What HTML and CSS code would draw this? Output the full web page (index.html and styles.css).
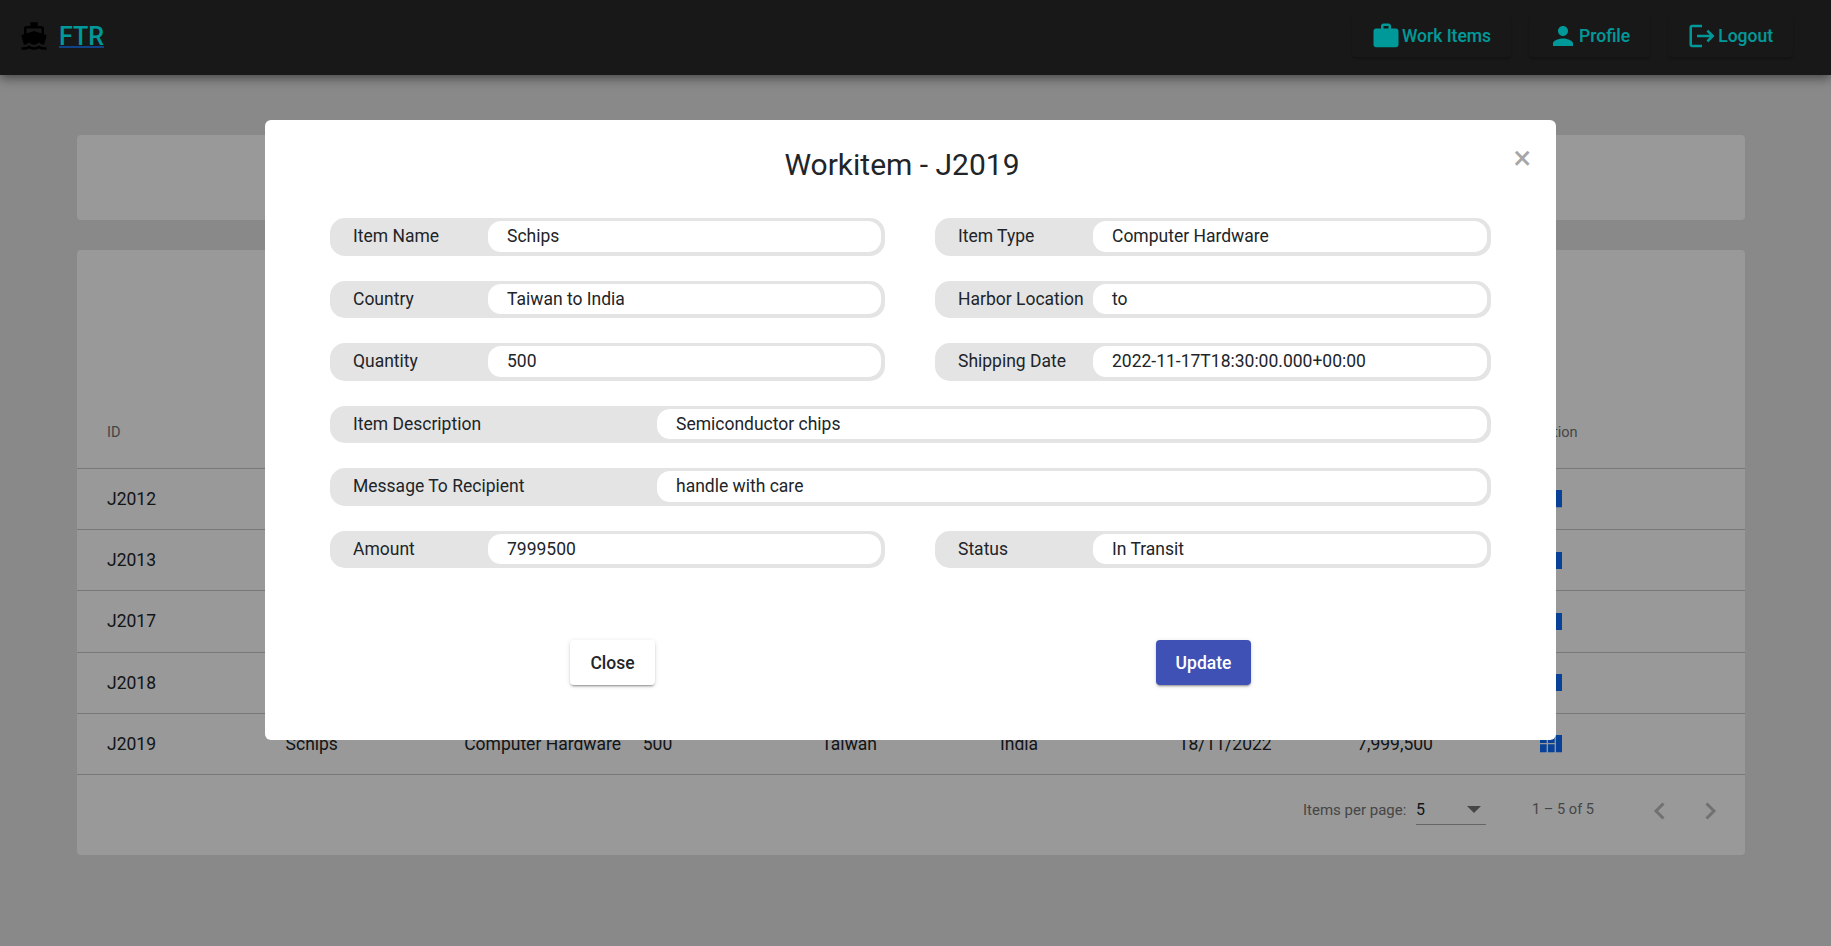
FILE: index.html
```html
<!DOCTYPE html>
<html lang="en">
    <head>
        <meta charset="UTF-8" />
        <meta name="viewport" content="width=device-width, initial-scale=1.0" />
        <title>FTR - Work Items</title>
        <link rel="stylesheet" href="styles.css">
    </head>
    <body>
        <header class="topbar">
            <svg class="boat" viewBox="0 0 24 24"><path d="M20 21c-1.39 0-2.78-.47-4-1.32-2.44 1.71-5.56 1.71-8 0C6.78 20.53 5.39 21 4 21H2v2h2c1.38 0 2.74-.35 4-.99 2.52 1.29 5.48 1.29 8 0 1.26.65 2.62.99 4 .99h2v-2h-2zM3.95 19H4c1.6 0 3.02-.88 4-2 .98 1.12 2.4 2 4 2s3.02-.88 4-2c.98 1.12 2.4 2 4 2h.05l1.89-6.68c.08-.26.06-.54-.06-.78s-.34-.42-.6-.5L20 10.62V6c0-1.1-.9-2-2-2h-3V1H9v3H6c-1.1 0-2 .9-2 2v4.62l-1.29.42c-.26.08-.48.26-.6.5s-.15.52-.06.78L3.95 19zM6 6h12v3.97L12 8 6 9.97V6z"/></svg>
            <a class="brand" href="#">FTR</a>
            <nav class="nav">
                <a class="nav-btn" href="#">
                    <svg viewBox="0 0 24 24"><path d="M20 6h-4V4c0-1.11-.89-2-2-2h-4c-1.11 0-2 .89-2 2v2H4c-1.11 0-1.99.89-1.99 2L2 19c0 1.11.89 2 2 2h16c1.11 0 2-.89 2-2V8c0-1.11-.89-2-2-2zm-6 0h-4V4h4v2z"/></svg>
                    <span>Work Items</span>
                </a>
                <a class="nav-btn" href="#">
                    <svg viewBox="0 0 24 24"><path d="M12 12c2.21 0 4-1.79 4-4s-1.79-4-4-4-4 1.79-4 4 1.79 4 4 4zm0 2c-2.67 0-8 1.34-8 4v2h16v-2c0-2.66-5.33-4-8-4z"/></svg>
                    <span>Profile</span>
                </a>
                <a class="nav-btn" href="#">
                    <svg viewBox="0 0 24 24"><path d="M17 7l-1.41 1.41L18.17 11H8v2h10.17l-2.58 2.58L17 17l5-5zM4 5h8V3H4c-1.1 0-2 .9-2 2v14c0 1.1.9 2 2 2h8v-2H4V5z"/></svg>
                    <span>Logout</span>
                </a>
            </nav>
        </header>

        <main class="page">
            <section class="card card-top"></section>
            <section class="card card-table">
                <div class="row row-head">
                    <span>ID</span>
                    <span></span><span></span><span></span><span></span><span></span><span></span><span></span>
                    <span>Action</span>
                </div>
                <div class="row">
                    <span>J2012</span>
                    <span></span><span></span><span></span><span></span><span></span><span></span><span></span>
                    <svg class="view-icon" viewBox="4 5 17 13"><path d="M4 11h5V5H4v6zm0 7h5v-6H4v6zm6 0h5v-6h-5v6zm6 0h5v-6h-5v6zm-6-7h5V5h-5v6zm6-5v6h5V5h-5z"/></svg>
                </div>
                <div class="row">
                    <span>J2013</span>
                    <span></span><span></span><span></span><span></span><span></span><span></span><span></span>
                    <svg class="view-icon" viewBox="4 5 17 13"><path d="M4 11h5V5H4v6zm0 7h5v-6H4v6zm6 0h5v-6h-5v6zm6 0h5v-6h-5v6zm-6-7h5V5h-5v6zm6-5v6h5V5h-5z"/></svg>
                </div>
                <div class="row">
                    <span>J2017</span>
                    <span></span><span></span><span></span><span></span><span></span><span></span><span></span>
                    <svg class="view-icon" viewBox="4 5 17 13"><path d="M4 11h5V5H4v6zm0 7h5v-6H4v6zm6 0h5v-6h-5v6zm6 0h5v-6h-5v6zm-6-7h5V5h-5v6zm6-5v6h5V5h-5z"/></svg>
                </div>
                <div class="row">
                    <span>J2018</span>
                    <span></span><span></span><span></span><span></span><span></span><span></span><span></span>
                    <svg class="view-icon" viewBox="4 5 17 13"><path d="M4 11h5V5H4v6zm0 7h5v-6H4v6zm6 0h5v-6h-5v6zm6 0h5v-6h-5v6zm-6-7h5V5h-5v6zm6-5v6h5V5h-5z"/></svg>
                </div>
                <div class="row">
                    <span>J2019</span>
                    <span>Schips</span>
                    <span class="nowrap">Computer Hardware</span>
                    <span>500</span>
                    <span>Taiwan</span>
                    <span>India</span>
                    <span>18/11/2022</span>
                    <span>7,999,500</span>
                    <svg class="view-icon" viewBox="4 5 17 13"><path d="M4 11h5V5H4v6zm0 7h5v-6H4v6zm6 0h5v-6h-5v6zm6 0h5v-6h-5v6zm-6-7h5V5h-5v6zm6-5v6h5V5h-5z"/></svg>
                </div>
                <div class="paginator">
                    <span class="per-page">Items per page:</span>
                    <div class="select">
                        <span>5</span>
                        <i class="select-arrow"></i>
                    </div>
                    <span class="range">1 – 5 of 5</span>
                    <svg class="chev chev-prev" viewBox="0 0 12 18"><path d="M10.5 1.5 3 9l7.5 7.5"/></svg>
                    <svg class="chev" viewBox="0 0 12 18"><path d="M1.5 1.5 9 9l-7.5 7.5"/></svg>
                </div>
            </section>
        </main>

        <div class="backdrop"></div>

        <div class="modal-wrap">
            <div class="modal">
                <div class="modal-head">
                    <h4>Workitem - J2019</h4>
                    <span class="close">×</span>
                </div>
                <div class="fields">
                    <div class="field"><label>Item Name</label><span class="value">Schips</span></div>
                    <div class="field"><label>Item Type</label><span class="value">Computer Hardware</span></div>
                    <div class="field"><label>Country</label><span class="value">Taiwan to India</span></div>
                    <div class="field"><label>Harbor Location</label><span class="value">to</span></div>
                    <div class="field"><label>Quantity</label><span class="value">500</span></div>
                    <div class="field"><label>Shipping Date</label><span class="value">2022-11-17T18:30:00.000+00:00</span></div>
                    <div class="field wide"><label>Item Description</label><span class="value">Semiconductor chips</span></div>
                    <div class="field wide"><label>Message To Recipient</label><span class="value">handle with care</span></div>
                    <div class="field"><label>Amount</label><span class="value">7999500</span></div>
                    <div class="field"><label>Status</label><span class="value">In Transit</span></div>
                </div>
                <div class="actions">
                    <button class="btn">Close</button>
                    <button class="btn btn-primary">Update</button>
                </div>
            </div>
        </div>
    </body>
</html>
```

FILE: styles.css
```css
* {
    box-sizing: border-box;
}
html, body {
    height: 100%;
}
body {
    margin: 0;
    overflow: hidden;
    background-color: #e4e4e4;
    color: #212529;
    font-family: Roboto, "Liberation Sans", sans-serif;
    font-size: 17.5px;
}

/* top bar */
.topbar {
    display: flex;
    align-items: center;
    height: 75px;
    padding: 0 38px 3px 19px;
    background-color: #282828;
    box-shadow: 0 3px 10px rgba(0, 0, 0, 0.5);
    position: relative;
}
.boat {
    width: 30px;
    height: 30px;
    margin: 0 10px 0 0;
    fill: #000;
}
.brand {
    color: #00ffff;
    font-size: 25px;
    font-weight: 500;
    text-decoration: underline;
    text-decoration-color: #1a6fe0;
    text-decoration-thickness: 2px;
}
.nav {
    display: flex;
    gap: 18px;
    margin-left: auto;
}
.nav-btn {
    display: flex;
    align-items: center;
    height: 42px;
    padding: 0 20px 0 19px;
    gap: 1px;
    border-radius: 4px;
    background-color: #282828;
    box-shadow: 0 2px 2px rgba(0, 0, 0, 0.2);
    color: #00ffff;
    font-weight: 500;
    text-decoration: none;
}
.nav-btn svg {
    width: 30px;
    height: 30px;
    fill: #00ffff;
}

/* page behind the dialog */
.page {
    padding: 60px 86px 0 77px;
}
.card {
    background-color: #fff;
    border-radius: 4px;
}
.card-top {
    height: 85px;
    margin-bottom: 30px;
}
.card-table {
    height: 605px;
    padding-top: 147px;
}
.row {
    display: grid;
    grid-template-columns: repeat(8, 178.6px) 1fr;
    align-items: center;
    height: 61.2px;
    padding-left: 30px;
    border-bottom: 1px solid #c8c8c8;
}
.row-head {
    height: 72px;
    padding-bottom: 2px;
    color: #757575;
    font-size: 14.6px;
}
.nowrap {
    white-space: nowrap;
}
.view-icon {
    width: 22.6px;
    height: 17.4px;
    margin-left: 4px;
    fill: #0d6efd;
}
.paginator {
    display: flex;
    align-items: center;
    height: 70px;
    padding-left: 1226px;
    color: #757575;
    font-size: 15px;
}
.per-page {
    width: 113px;
}
.select {
    display: flex;
    align-items: center;
    justify-content: space-between;
    width: 70px;
    height: 31px;
    padding-right: 5px;
    border-bottom: 1px solid #a8a8a8;
    color: #212529;
    font-size: 16px;
}
.select-arrow {
    width: 0;
    height: 0;
    border-left: 7px solid transparent;
    border-right: 7px solid transparent;
    border-top: 7px solid #757575;
}
.range {
    width: 121px;
    margin: 0 0 2px 46px;
    font-size: 14.6px;
}
.chev {
    width: 12px;
    height: 18px;
    margin-top: 2px;
    fill: none;
    stroke: #bdbdbd;
    stroke-width: 3;
}
.chev-prev {
    margin-right: 40px;
}

/* dialog */
.backdrop {
    position: fixed;
    inset: 0;
    background-color: rgba(0, 0, 0, 0.4);
}
.modal-wrap {
    position: fixed;
    inset: 0;
    display: flex;
    justify-content: center;
    padding: 120px 10px 0 0;
}
.modal {
    width: 1291px;
    height: 620px;
    padding: 0 65px;
    background-color: #fff;
    border-radius: 6px;
}
.modal-head {
    display: flex;
    justify-content: center;
    align-items: center;
    height: 98px;
    padding: 0 17px 9px 0;
    position: relative;
}
.modal-head h4 {
    margin: 0;
    font-size: 30px;
    font-weight: 400;
}
.close {
    position: absolute;
    right: -40px;
    top: 18px;
    color: #a6a6a6;
    font-size: 33px;
    font-weight: 400;
    line-height: 40px;
}
.fields {
    display: grid;
    grid-template-columns: 555px 556px;
    column-gap: 50px;
    row-gap: 25px;
}
.field {
    display: flex;
    height: 37.5px;
    padding: 3px 4px 4px 0;
    background-color: #e4e4e4;
    border-radius: 15px;
}
.field label {
    flex: none;
    width: 158px;
    padding-left: 23px;
    line-height: 30px;
}
.field .value {
    flex: 1;
    padding-left: 19px;
    background-color: #fff;
    border-radius: 13px;
    line-height: 30px;
}
.wide {
    grid-column: 1 / 3;
}
.wide label {
    width: 327px;
}
.actions {
    display: grid;
    grid-template-columns: 591px 591px;
    justify-items: center;
    margin: 72px 0 0 -13px;
}
.btn {
    height: 45px;
    padding: 0 20px;
    background-color: #fff;
    border: none;
    border-radius: 4px;
    box-shadow: 0 3px 1px -2px rgba(0, 0, 0, 0.2), 0 2px 2px rgba(0, 0, 0, 0.14), 0 1px 5px rgba(0, 0, 0, 0.12);
    color: #212529;
    font-family: inherit;
    font-size: 17.5px;
    font-weight: 500;
}
.btn-primary {
    background-color: #3f51b5;
    color: #fff;
}
```
